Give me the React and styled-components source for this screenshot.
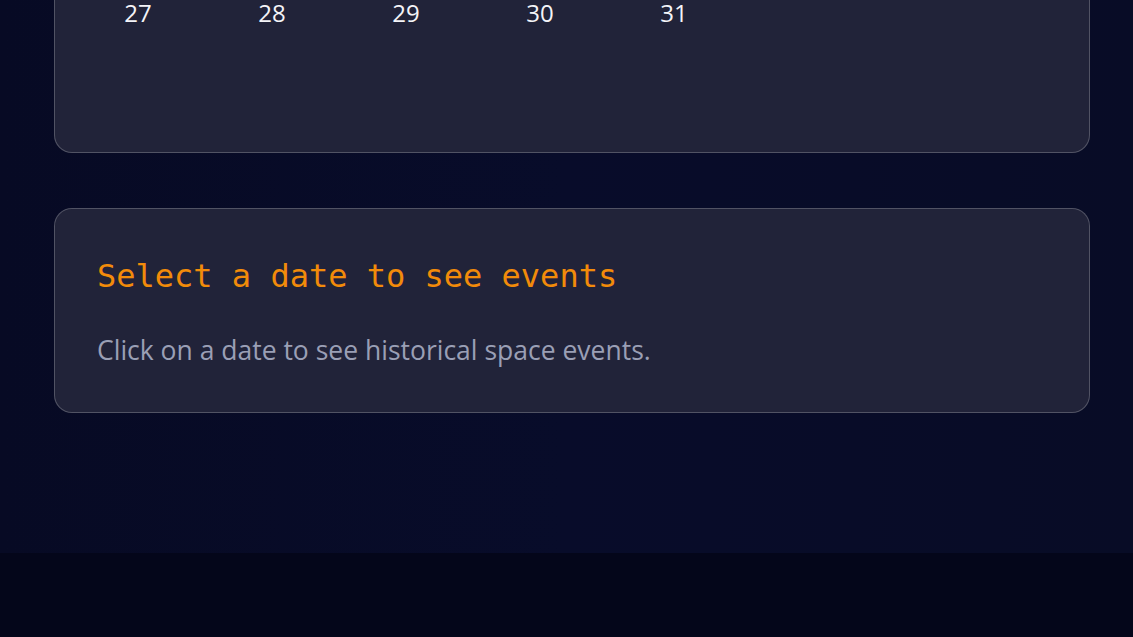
import React from "react";
import styled, { createGlobalStyle } from "styled-components";

const Global = createGlobalStyle`
  html, body { margin: 0; padding: 0; background: #04061a; }
  body { font-family: "Open Sans", "Noto Sans", sans-serif; color: #fff; }
  * { box-sizing: border-box; }
`;

const Page = styled.div`
  display: flex;
  flex-direction: column;
  min-height: 637px;
`;

const Main = styled.main`
  background: linear-gradient(90deg, #070a24 0%, #080c2a 50%, #080c26 100%);
  padding: 0 43px 140px 54px;
  display: flex;
  flex-direction: column;
  gap: 55px;
`;

const Card = styled.section`
  background: #212339;
  border: 1px solid rgba(255, 255, 255, 0.22);
  border-radius: 18px;
  ${(p) =>
    p.$clipped &&
    `
    border-top: none;
    border-top-left-radius: 0;
    border-top-right-radius: 0;
  `}
`;

const CalendarCard = styled(Card)`
  padding: 0 16px;
  height: 153px;
`;

const DayGrid = styled.div`
  display: grid;
  grid-template-columns: repeat(7, 134px);
`;

const Day = styled.div`
  text-align: center;
  font-size: 24px;
  line-height: 26px;
  color: #f4f4f8;
`;

const EventsCard = styled(Card)`
  padding: 43px 42px 41px;
  height: 205px;
`;

const Heading = styled.h2`
  margin: 0;
  font-family: "DejaVu Sans Mono", "Liberation Mono", monospace;
  font-weight: normal;
  font-size: 32px;
  line-height: 48px;
  color: #f28b0a;
`;

const Text = styled.p`
  margin: 31px 0 0;
  font-size: 26.5px;
  line-height: 38px;
  color: #9a9fb5;
`;

const Footer = styled.footer`
  flex: 1;
  background: #04061a;
  min-height: 84px;
`;

const lastWeek = [27, 28, 29, 30, 31];

export default function App() {
  return (
    <>
      <Global />
      <Page>
        <Main>
          <CalendarCard $clipped>
            <DayGrid>
              {lastWeek.map((d) => (
                <Day key={d}>{d}</Day>
              ))}
            </DayGrid>
          </CalendarCard>
          <EventsCard>
            <Heading>Select a date to see events</Heading>
            <Text>Click on a date to see historical space events.</Text>
          </EventsCard>
        </Main>
        <Footer />
      </Page>
    </>
  );
}
